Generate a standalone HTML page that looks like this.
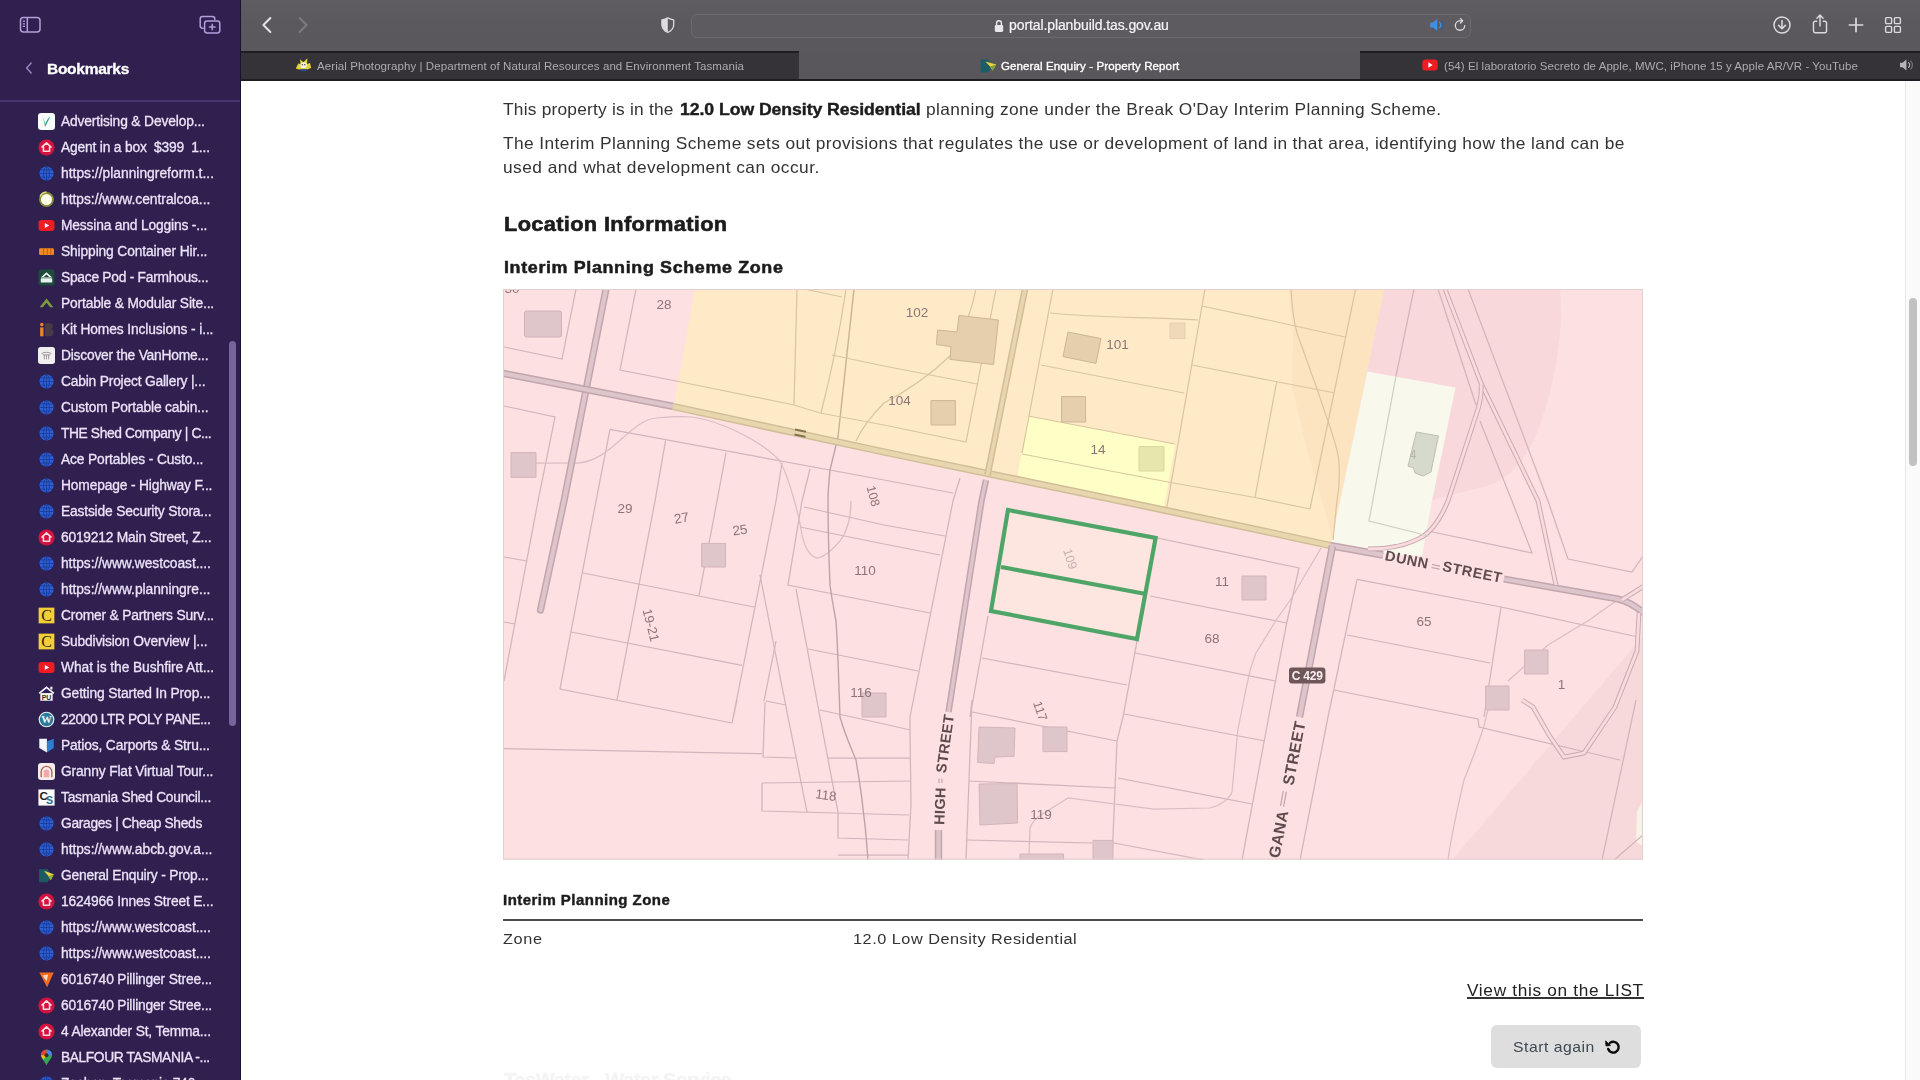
<!DOCTYPE html>
<html lang="en">
<head>
<meta charset="utf-8">
<title>General Enquiry - Property Report</title>
<style>
*{box-sizing:border-box;margin:0;padding:0}
html,body{width:1920px;height:1080px;overflow:hidden;background:#fff;font-family:"Liberation Sans",sans-serif;}
.abs{position:absolute}
#sidebar{position:absolute;left:0;top:0;width:241px;height:1080px;background:#30204f;overflow:hidden;border-right:1.6px solid #1b1132;z-index:5}
#sidebar .sep{position:absolute;left:0;top:100.4px;width:240px;height:1.4px;background:#47376c}
#sidebar .title{position:absolute;left:46px;top:58px;font-size:15.5px;font-weight:700;color:#fff;line-height:20px;letter-spacing:-0.1px}
.bm{position:absolute;left:60px;height:20px;line-height:20px;font-size:13.5px;color:#efe9f7;white-space:nowrap;-webkit-text-stroke:0.3px #efe9f7}
.ico{position:absolute;left:37.6px;width:17px;height:17px}
#sbthumb{position:absolute;left:229px;top:341px;width:7px;height:385px;border-radius:4px;background:#75659b}
#toolbar{position:absolute;left:240px;top:0;width:1680px;height:52px;background:linear-gradient(#5f5d62,#5b595e 40%,#5a585d)}
#tabbar{position:absolute;left:240px;top:51px;width:1680px;height:29.6px;background:#1f1d22;z-index:3}
.tab{position:absolute;top:1.8px;height:25.8px;background:#353338;color:#c9c7cc;font-size:11.5px;line-height:26px;white-space:nowrap}
.tab.active{background:#59575c;color:#fff;top:0;height:27.6px}
#urlbar{position:absolute;left:451px;top:14px;width:780px;height:24px;border-radius:6px;background:#5d5b60;border:1px solid #6b696e}
#page{position:absolute;left:240px;top:80px;width:1680px;height:1000px;background:#fff;overflow:hidden}
.t{position:absolute;white-space:nowrap;color:#2b2b2b;will-change:transform}
#vtrack{position:absolute;left:1905px;top:80px;width:15px;height:1000px;background:#fafafa;border-left:1px solid #e8e8e8}
#vthumb{position:absolute;left:1909px;top:298px;width:8px;height:168px;border-radius:4px;background:#c1c1c1}
</style>
</head>
<body>
<!--SIDEBAR-->
<div id="sidebar">

<svg class="abs" style="left:19px;top:15px" width="23" height="20" viewBox="0 0 23 20"><g fill="none" stroke="#b39ddb" stroke-width="1.5"><rect x="1.5" y="2.5" width="19.5" height="14.5" rx="3"/><path d="M8.3 2.5v14.5"/><path d="M3.8 6.2h2.2M3.8 8.8h2.2M3.8 11.4h2.2" stroke-width="1.2"/></g></svg>
<svg class="abs" style="left:198px;top:14px" width="25" height="22" viewBox="0 0 25 22"><g fill="none" stroke="#b39ddb" stroke-width="1.5" stroke-linecap="round"><path d="M5.2 14.2H4.6A2.4 2.4 0 0 1 2.2 11.8V5A2.4 2.4 0 0 1 4.6 2.6H14.4A2.4 2.4 0 0 1 16.8 5V5.6"/><rect x="6.6" y="7" width="15.2" height="12" rx="2.4"/><path d="M14.2 10.2v5.6M11.4 13h5.6"/></g></svg>
<svg class="abs" style="left:24px;top:61px" width="10" height="14" viewBox="0 0 10 14"><path d="M7.2 2 2.6 7 7.2 12" fill="none" stroke="#9a87c2" stroke-width="1.4" stroke-linecap="round" stroke-linejoin="round"/></svg>
<div class="t" style="left:47.00px;top:58.63px;font-size:15.5px;line-height:20px;font-weight:700;color:#ffffff;letter-spacing:-0.271px;-webkit-text-stroke:0.3px #fff;">Bookmarks</div>

<div class="sep"></div>
<svg class="ico" style="top:112.5px" viewBox="0 0 16 16"><rect x="0" y="0" width="16" height="16" rx="3" fill="#f7fbfa"/><path d="M4.2 3.5C5.5 6 6.3 8 6.8 10.2 8 7 9.6 4.6 11.8 3.2 10 6 8.6 9.5 6.6 13.2 6.3 10 5.4 6.5 4.2 3.5Z" fill="#3c9e95"/></svg>
<div class="t" style="left:60.70px;top:113.02px;font-size:13.8px;line-height:18px;font-weight:400;color:#ece3f8;letter-spacing:-0.144px;-webkit-text-stroke:0.3px #ece3f8;">Advertising &amp; Develop...</div>
<svg class="ico" style="top:138.5px" viewBox="0 0 16 16"><circle cx="8" cy="8" r="7.6" fill="#d3123f"/><path d="M8 3.6 12.3 7.6H10.9V11.6H5.1V7.6H3.7Z" fill="none" stroke="#ffd9e0" stroke-width="1.5" stroke-linejoin="round"/></svg>
<div class="t" style="left:60.70px;top:139.02px;font-size:13.8px;line-height:18px;font-weight:400;color:#ece3f8;letter-spacing:-0.178px;-webkit-text-stroke:0.3px #ece3f8;">Agent in a box&nbsp; $399&nbsp; 1...</div>
<svg class="ico" style="top:164.5px" viewBox="0 0 16 16"><circle cx="8" cy="8" r="6.6" fill="#2a5fd6"/><g fill="none" stroke="#1d3f9c" stroke-width="0.9"><ellipse cx="8" cy="8" rx="2.8" ry="6.4"/><path d="M1.6 8h12.8M2.6 4.6h10.8M2.6 11.4h10.8M8 1.5v13"/></g></svg>
<div class="t" style="left:60.70px;top:165.02px;font-size:13.8px;line-height:18px;font-weight:400;color:#ece3f8;letter-spacing:0.014px;-webkit-text-stroke:0.3px #ece3f8;">https://planningreform.t...</div>
<svg class="ico" style="top:190.5px" viewBox="0 0 16 16"><circle cx="8" cy="8" r="7" fill="#8a8a3a"/><circle cx="8" cy="8" r="5.2" fill="#fbfce9"/><path d="M2 5A7 7 0 0 1 8 1" stroke="#dfe08a" stroke-width="1.4" fill="none"/></svg>
<div class="t" style="left:60.70px;top:191.02px;font-size:13.8px;line-height:18px;font-weight:400;color:#ece3f8;letter-spacing:-0.009px;-webkit-text-stroke:0.3px #ece3f8;">https://www.centralcoa...</div>
<svg class="ico" style="top:216.5px" viewBox="0 0 16 16"><rect x="0.5" y="2.8" width="15" height="10.4" rx="3" fill="#f01c24"/><path d="M6.4 5.6 10.6 8 6.4 10.4Z" fill="#fff"/></svg>
<div class="t" style="left:60.70px;top:217.02px;font-size:13.8px;line-height:18px;font-weight:400;color:#ece3f8;letter-spacing:-0.168px;-webkit-text-stroke:0.3px #ece3f8;">Messina and Loggins -...</div>
<svg class="ico" style="top:242.5px" viewBox="0 0 16 16"><rect x="1" y="5" width="14" height="6.4" rx="1.2" fill="#f08a1e"/><path d="M5.2 5v6.4M8.8 5v6.4M12 5v6.4" stroke="#c05f10" stroke-width="0.9"/></svg>
<div class="t" style="left:60.70px;top:243.02px;font-size:13.8px;line-height:18px;font-weight:400;color:#ece3f8;letter-spacing:-0.130px;-webkit-text-stroke:0.3px #ece3f8;">Shipping Container Hir...</div>
<svg class="ico" style="top:268.5px" viewBox="0 0 16 16"><rect x="0.4" y="0.4" width="15.2" height="15.2" rx="3" fill="#1d4b3d"/><path d="M8 3 13.4 8H2.6Z" fill="#f3faf6"/><path d="M8 5.2 10.6 7.6H5.4Z" fill="#1d4b3d"/><rect x="2.6" y="8.8" width="10.8" height="4" rx="0.6" fill="#e6f3ec"/></svg>
<div class="t" style="left:60.70px;top:269.02px;font-size:13.8px;line-height:18px;font-weight:400;color:#ece3f8;letter-spacing:-0.264px;-webkit-text-stroke:0.3px #ece3f8;">Space Pod - Farmhous...</div>
<svg class="ico" style="top:294.5px" viewBox="0 0 16 16"><path d="M1.5 11.5 8 3.2 14.5 11.5H11.4L8 7.2 4.6 11.5Z" fill="#7f9a3e"/></svg>
<div class="t" style="left:60.70px;top:295.02px;font-size:13.8px;line-height:18px;font-weight:400;color:#ece3f8;letter-spacing:-0.162px;-webkit-text-stroke:0.3px #ece3f8;">Portable &amp; Modular Site...</div>
<svg class="ico" style="top:320.5px" viewBox="0 0 16 16"><rect x="2" y="6" width="3.2" height="8.4" fill="#e8842c"/><circle cx="3.6" cy="3.4" r="1.7" fill="#e8842c"/><path d="M6.6 2H10.8C13 2 14 3.3 14 5 14 6.3 13.4 7.2 12.4 7.6 13.8 8 14.6 9.2 14.6 10.8 14.6 13 13.2 14.4 10.8 14.4H6.6Z" fill="#4a3a44"/></svg>
<div class="t" style="left:60.70px;top:321.02px;font-size:13.8px;line-height:18px;font-weight:400;color:#ece3f8;letter-spacing:-0.124px;-webkit-text-stroke:0.3px #ece3f8;">Kit Homes Inclusions - i...</div>
<svg class="ico" style="top:346.5px" viewBox="0 0 16 16"><rect x="0" y="0" width="16" height="16" rx="2.6" fill="#f1eef0"/><path d="M3.4 6.2C6 4.6 10 4.6 12.6 6.2M4.4 7.4H11.6M6 7.4V11.6M8 7.4V11.6M10 7.4V11.6" stroke="#9a9496" stroke-width="0.9" fill="none"/></svg>
<div class="t" style="left:60.70px;top:347.02px;font-size:13.8px;line-height:18px;font-weight:400;color:#ece3f8;letter-spacing:-0.219px;-webkit-text-stroke:0.3px #ece3f8;">Discover the VanHome...</div>
<svg class="ico" style="top:372.5px" viewBox="0 0 16 16"><circle cx="8" cy="8" r="6.6" fill="#2a5fd6"/><g fill="none" stroke="#1d3f9c" stroke-width="0.9"><ellipse cx="8" cy="8" rx="2.8" ry="6.4"/><path d="M1.6 8h12.8M2.6 4.6h10.8M2.6 11.4h10.8M8 1.5v13"/></g></svg>
<div class="t" style="left:60.70px;top:373.02px;font-size:13.8px;line-height:18px;font-weight:400;color:#ece3f8;letter-spacing:-0.192px;-webkit-text-stroke:0.3px #ece3f8;">Cabin Project Gallery |...</div>
<svg class="ico" style="top:398.5px" viewBox="0 0 16 16"><circle cx="8" cy="8" r="6.6" fill="#2a5fd6"/><g fill="none" stroke="#1d3f9c" stroke-width="0.9"><ellipse cx="8" cy="8" rx="2.8" ry="6.4"/><path d="M1.6 8h12.8M2.6 4.6h10.8M2.6 11.4h10.8M8 1.5v13"/></g></svg>
<div class="t" style="left:60.70px;top:399.02px;font-size:13.8px;line-height:18px;font-weight:400;color:#ece3f8;letter-spacing:-0.157px;-webkit-text-stroke:0.3px #ece3f8;">Custom Portable cabin...</div>
<svg class="ico" style="top:424.5px" viewBox="0 0 16 16"><circle cx="8" cy="8" r="6.6" fill="#2a5fd6"/><g fill="none" stroke="#1d3f9c" stroke-width="0.9"><ellipse cx="8" cy="8" rx="2.8" ry="6.4"/><path d="M1.6 8h12.8M2.6 4.6h10.8M2.6 11.4h10.8M8 1.5v13"/></g></svg>
<div class="t" style="left:60.70px;top:425.02px;font-size:13.8px;line-height:18px;font-weight:400;color:#ece3f8;letter-spacing:-0.389px;-webkit-text-stroke:0.3px #ece3f8;">THE Shed Company | C...</div>
<svg class="ico" style="top:450.5px" viewBox="0 0 16 16"><circle cx="8" cy="8" r="6.6" fill="#2a5fd6"/><g fill="none" stroke="#1d3f9c" stroke-width="0.9"><ellipse cx="8" cy="8" rx="2.8" ry="6.4"/><path d="M1.6 8h12.8M2.6 4.6h10.8M2.6 11.4h10.8M8 1.5v13"/></g></svg>
<div class="t" style="left:60.70px;top:451.02px;font-size:13.8px;line-height:18px;font-weight:400;color:#ece3f8;letter-spacing:-0.142px;-webkit-text-stroke:0.3px #ece3f8;">Ace Portables - Custo...</div>
<svg class="ico" style="top:476.5px" viewBox="0 0 16 16"><circle cx="8" cy="8" r="6.6" fill="#2a5fd6"/><g fill="none" stroke="#1d3f9c" stroke-width="0.9"><ellipse cx="8" cy="8" rx="2.8" ry="6.4"/><path d="M1.6 8h12.8M2.6 4.6h10.8M2.6 11.4h10.8M8 1.5v13"/></g></svg>
<div class="t" style="left:60.70px;top:477.02px;font-size:13.8px;line-height:18px;font-weight:400;color:#ece3f8;letter-spacing:-0.157px;-webkit-text-stroke:0.3px #ece3f8;">Homepage - Highway F...</div>
<svg class="ico" style="top:502.5px" viewBox="0 0 16 16"><circle cx="8" cy="8" r="6.6" fill="#2a5fd6"/><g fill="none" stroke="#1d3f9c" stroke-width="0.9"><ellipse cx="8" cy="8" rx="2.8" ry="6.4"/><path d="M1.6 8h12.8M2.6 4.6h10.8M2.6 11.4h10.8M8 1.5v13"/></g></svg>
<div class="t" style="left:60.70px;top:503.02px;font-size:13.8px;line-height:18px;font-weight:400;color:#ece3f8;letter-spacing:-0.177px;-webkit-text-stroke:0.3px #ece3f8;">Eastside Security Stora...</div>
<svg class="ico" style="top:528.5px" viewBox="0 0 16 16"><circle cx="8" cy="8" r="7.6" fill="#d3123f"/><path d="M8 3.6 12.3 7.6H10.9V11.6H5.1V7.6H3.7Z" fill="none" stroke="#ffd9e0" stroke-width="1.5" stroke-linejoin="round"/></svg>
<div class="t" style="left:60.70px;top:529.02px;font-size:13.8px;line-height:18px;font-weight:400;color:#ece3f8;letter-spacing:-0.215px;-webkit-text-stroke:0.3px #ece3f8;">6019212 Main Street, Z...</div>
<svg class="ico" style="top:554.5px" viewBox="0 0 16 16"><circle cx="8" cy="8" r="6.6" fill="#2a5fd6"/><g fill="none" stroke="#1d3f9c" stroke-width="0.9"><ellipse cx="8" cy="8" rx="2.8" ry="6.4"/><path d="M1.6 8h12.8M2.6 4.6h10.8M2.6 11.4h10.8M8 1.5v13"/></g></svg>
<div class="t" style="left:60.70px;top:555.02px;font-size:13.8px;line-height:18px;font-weight:400;color:#ece3f8;letter-spacing:-0.050px;-webkit-text-stroke:0.3px #ece3f8;">https://www.westcoast....</div>
<svg class="ico" style="top:580.5px" viewBox="0 0 16 16"><circle cx="8" cy="8" r="6.6" fill="#2a5fd6"/><g fill="none" stroke="#1d3f9c" stroke-width="0.9"><ellipse cx="8" cy="8" rx="2.8" ry="6.4"/><path d="M1.6 8h12.8M2.6 4.6h10.8M2.6 11.4h10.8M8 1.5v13"/></g></svg>
<div class="t" style="left:60.70px;top:581.02px;font-size:13.8px;line-height:18px;font-weight:400;color:#ece3f8;letter-spacing:-0.040px;-webkit-text-stroke:0.3px #ece3f8;">https://www.planningre...</div>
<svg class="ico" style="top:606.5px" viewBox="0 0 16 16"><rect x="0.6" y="0.6" width="14.8" height="14.8" fill="#f3cf35"/><text x="8" y="13.2" font-family="Liberation Serif,serif" font-size="15" text-anchor="middle" fill="#2b2410">C</text></svg>
<div class="t" style="left:60.70px;top:607.02px;font-size:13.8px;line-height:18px;font-weight:400;color:#ece3f8;letter-spacing:-0.188px;-webkit-text-stroke:0.3px #ece3f8;">Cromer &amp; Partners Surv...</div>
<svg class="ico" style="top:632.5px" viewBox="0 0 16 16"><rect x="0.6" y="0.6" width="14.8" height="14.8" fill="#f3cf35"/><text x="8" y="13.2" font-family="Liberation Serif,serif" font-size="15" text-anchor="middle" fill="#2b2410">C</text></svg>
<div class="t" style="left:60.70px;top:633.02px;font-size:13.8px;line-height:18px;font-weight:400;color:#ece3f8;letter-spacing:-0.180px;-webkit-text-stroke:0.3px #ece3f8;">Subdivision Overview |...</div>
<svg class="ico" style="top:658.5px" viewBox="0 0 16 16"><rect x="0.5" y="2.8" width="15" height="10.4" rx="3" fill="#f01c24"/><path d="M6.4 5.6 10.6 8 6.4 10.4Z" fill="#fff"/></svg>
<div class="t" style="left:60.70px;top:659.02px;font-size:13.8px;line-height:18px;font-weight:400;color:#ece3f8;letter-spacing:-0.071px;-webkit-text-stroke:0.3px #ece3f8;">What is the Bushfire Att...</div>
<svg class="ico" style="top:684.5px" viewBox="0 0 16 16"><path d="M8 1.2 15.4 7.4 14.4 8.4 8 3.2 1.6 8.4 0.6 7.4Z" fill="#f4f1f4"/><rect x="2.2" y="7.6" width="11.6" height="7.2" fill="#fbf7ee"/><text x="8" y="14" font-family="Liberation Sans,sans-serif" font-weight="700" font-size="6.6" text-anchor="middle" fill="#3b2f2a">PU</text><rect x="11.6" y="1.6" width="2" height="2.6" fill="#f4f1f4"/></svg>
<div class="t" style="left:60.70px;top:685.02px;font-size:13.8px;line-height:18px;font-weight:400;color:#ece3f8;letter-spacing:-0.128px;-webkit-text-stroke:0.3px #ece3f8;">Getting Started In Prop...</div>
<svg class="ico" style="top:710.5px" viewBox="0 0 16 16"><circle cx="8" cy="8" r="7.4" fill="#e9eef2"/><circle cx="8" cy="8" r="6.3" fill="#2c7a9b"/><text x="8" y="11.6" font-family="Liberation Serif,serif" font-weight="700" font-size="10" text-anchor="middle" fill="#eef3f6">W</text></svg>
<div class="t" style="left:60.70px;top:711.02px;font-size:13.8px;line-height:18px;font-weight:400;color:#ece3f8;letter-spacing:-0.418px;-webkit-text-stroke:0.3px #ece3f8;">22000 LTR POLY PANE...</div>
<svg class="ico" style="top:736.5px" viewBox="0 0 16 16"><path d="M1.2 1.6H8.4V14.6L1.2 10.4Z" fill="#f3f6fb"/><path d="M8.4 4.2 14.8 1.6V10.4L8.4 14.6Z" fill="#2f7fd1"/></svg>
<div class="t" style="left:60.70px;top:737.02px;font-size:13.8px;line-height:18px;font-weight:400;color:#ece3f8;letter-spacing:-0.146px;-webkit-text-stroke:0.3px #ece3f8;">Patios, Carports &amp; Stru...</div>
<svg class="ico" style="top:762.5px" viewBox="0 0 16 16"><rect x="0" y="0" width="16" height="16" rx="3" fill="#f6ecec"/><path d="M3 13.4V8.2A5 5 0 0 1 13 8.2V13.4" fill="none" stroke="#b5645c" stroke-width="1.3"/><path d="M5.4 13.4V8.8A2.6 2.6 0 0 1 10.6 8.8V13.4Z" fill="#f2a9a4"/></svg>
<div class="t" style="left:60.70px;top:763.02px;font-size:13.8px;line-height:18px;font-weight:400;color:#ece3f8;letter-spacing:-0.135px;-webkit-text-stroke:0.3px #ece3f8;">Granny Flat Virtual Tour...</div>
<svg class="ico" style="top:788.5px" viewBox="0 0 16 16"><rect x="0.4" y="0.4" width="15.2" height="15.2" fill="#fbfbfb"/><text x="5.4" y="10.6" font-family="Liberation Sans,sans-serif" font-weight="700" font-size="11" text-anchor="middle" fill="#1d1d1d">C</text><text x="10.8" y="14.4" font-family="Liberation Sans,sans-serif" font-weight="700" font-size="10" text-anchor="middle" fill="#2d6a8e">S</text></svg>
<div class="t" style="left:60.70px;top:789.02px;font-size:13.8px;line-height:18px;font-weight:400;color:#ece3f8;letter-spacing:-0.269px;-webkit-text-stroke:0.3px #ece3f8;">Tasmania Shed Council...</div>
<svg class="ico" style="top:814.5px" viewBox="0 0 16 16"><circle cx="8" cy="8" r="6.6" fill="#2a5fd6"/><g fill="none" stroke="#1d3f9c" stroke-width="0.9"><ellipse cx="8" cy="8" rx="2.8" ry="6.4"/><path d="M1.6 8h12.8M2.6 4.6h10.8M2.6 11.4h10.8M8 1.5v13"/></g></svg>
<div class="t" style="left:60.70px;top:815.02px;font-size:13.8px;line-height:18px;font-weight:400;color:#ece3f8;letter-spacing:-0.323px;-webkit-text-stroke:0.3px #ece3f8;">Garages | Cheap Sheds</div>
<svg class="ico" style="top:840.5px" viewBox="0 0 16 16"><circle cx="8" cy="8" r="6.6" fill="#2a5fd6"/><g fill="none" stroke="#1d3f9c" stroke-width="0.9"><ellipse cx="8" cy="8" rx="2.8" ry="6.4"/><path d="M1.6 8h12.8M2.6 4.6h10.8M2.6 11.4h10.8M8 1.5v13"/></g></svg>
<div class="t" style="left:60.70px;top:841.02px;font-size:13.8px;line-height:18px;font-weight:400;color:#ece3f8;letter-spacing:-0.042px;-webkit-text-stroke:0.3px #ece3f8;">https://www.abcb.gov.a...</div>
<svg class="ico" style="top:866.5px" viewBox="0 0 16 16"><path d="M1 2.2H9L13 8.2 9 14.4H1Z" fill="#1d5b63"/><path d="M5.6 3.6 14.8 6.8 12 12.4 9.8 8.4Z" fill="#f1d43a"/><path d="M9.8 8.4 14.8 6.8 12 12.4Z" fill="#8fae3b"/></svg>
<div class="t" style="left:60.70px;top:867.02px;font-size:13.8px;line-height:18px;font-weight:400;color:#ece3f8;letter-spacing:-0.212px;-webkit-text-stroke:0.3px #ece3f8;">General Enquiry - Prop...</div>
<svg class="ico" style="top:892.5px" viewBox="0 0 16 16"><circle cx="8" cy="8" r="7.6" fill="#d3123f"/><path d="M8 3.6 12.3 7.6H10.9V11.6H5.1V7.6H3.7Z" fill="none" stroke="#ffd9e0" stroke-width="1.5" stroke-linejoin="round"/></svg>
<div class="t" style="left:60.70px;top:893.02px;font-size:13.8px;line-height:18px;font-weight:400;color:#ece3f8;letter-spacing:-0.167px;-webkit-text-stroke:0.3px #ece3f8;">1624966 Innes Street E...</div>
<svg class="ico" style="top:918.5px" viewBox="0 0 16 16"><circle cx="8" cy="8" r="6.6" fill="#2a5fd6"/><g fill="none" stroke="#1d3f9c" stroke-width="0.9"><ellipse cx="8" cy="8" rx="2.8" ry="6.4"/><path d="M1.6 8h12.8M2.6 4.6h10.8M2.6 11.4h10.8M8 1.5v13"/></g></svg>
<div class="t" style="left:60.70px;top:919.02px;font-size:13.8px;line-height:18px;font-weight:400;color:#ece3f8;letter-spacing:-0.050px;-webkit-text-stroke:0.3px #ece3f8;">https://www.westcoast....</div>
<svg class="ico" style="top:944.5px" viewBox="0 0 16 16"><circle cx="8" cy="8" r="6.6" fill="#2a5fd6"/><g fill="none" stroke="#1d3f9c" stroke-width="0.9"><ellipse cx="8" cy="8" rx="2.8" ry="6.4"/><path d="M1.6 8h12.8M2.6 4.6h10.8M2.6 11.4h10.8M8 1.5v13"/></g></svg>
<div class="t" style="left:60.70px;top:945.02px;font-size:13.8px;line-height:18px;font-weight:400;color:#ece3f8;letter-spacing:-0.050px;-webkit-text-stroke:0.3px #ece3f8;">https://www.westcoast....</div>
<svg class="ico" style="top:970.5px" viewBox="0 0 16 16"><path d="M1.2 1.4H14.8L8.6 15.2Z" fill="#ef6a1f"/><path d="M4.2 4.2 9.6 3.4 8 9.6Z" fill="#ffd7ba"/></svg>
<div class="t" style="left:60.70px;top:971.02px;font-size:13.8px;line-height:18px;font-weight:400;color:#ece3f8;letter-spacing:-0.151px;-webkit-text-stroke:0.3px #ece3f8;">6016740 Pillinger Stree...</div>
<svg class="ico" style="top:996.5px" viewBox="0 0 16 16"><circle cx="8" cy="8" r="7.6" fill="#d3123f"/><path d="M8 3.6 12.3 7.6H10.9V11.6H5.1V7.6H3.7Z" fill="none" stroke="#ffd9e0" stroke-width="1.5" stroke-linejoin="round"/></svg>
<div class="t" style="left:60.70px;top:997.02px;font-size:13.8px;line-height:18px;font-weight:400;color:#ece3f8;letter-spacing:-0.151px;-webkit-text-stroke:0.3px #ece3f8;">6016740 Pillinger Stree...</div>
<svg class="ico" style="top:1022.5px" viewBox="0 0 16 16"><circle cx="8" cy="8" r="7.6" fill="#d3123f"/><path d="M8 3.6 12.3 7.6H10.9V11.6H5.1V7.6H3.7Z" fill="none" stroke="#ffd9e0" stroke-width="1.5" stroke-linejoin="round"/></svg>
<div class="t" style="left:60.70px;top:1023.02px;font-size:13.8px;line-height:18px;font-weight:400;color:#ece3f8;letter-spacing:-0.170px;-webkit-text-stroke:0.3px #ece3f8;">4 Alexander St, Temma...</div>
<svg class="ico" style="top:1048.5px" viewBox="0 0 16 16"><path d="M8 0.8C11 0.8 13.2 3 13.2 5.8 13.2 9 9.6 11.4 8 15.4 6.4 11.4 2.8 9 2.8 5.8 2.8 3 5 0.8 8 0.8Z" fill="#34a853"/><path d="M8 0.8C11 0.8 13.2 3 13.2 5.8L8 5.8Z" fill="#4285f4"/><path d="M2.8 5.8C2.8 3 5 0.8 8 0.8V5.8Z" fill="#ea4335"/><path d="M2.8 5.8H8L5 10Z" fill="#fbbc04"/><circle cx="8" cy="5.8" r="1.9" fill="#3b2a2a"/></svg>
<div class="t" style="left:60.70px;top:1049.02px;font-size:13.8px;line-height:18px;font-weight:400;color:#ece3f8;letter-spacing:-0.411px;-webkit-text-stroke:0.3px #ece3f8;">BALFOUR TASMANIA -...</div>
<svg class="ico" style="top:1074.5px" viewBox="0 0 16 16"><circle cx="8" cy="8" r="6.6" fill="#2a5fd6"/><g fill="none" stroke="#1d3f9c" stroke-width="0.9"><ellipse cx="8" cy="8" rx="2.8" ry="6.4"/><path d="M1.6 8h12.8M2.6 4.6h10.8M2.6 11.4h10.8M8 1.5v13"/></g></svg>
<div class="t" style="left:60.70px;top:1075.02px;font-size:13.8px;line-height:18px;font-weight:400;color:#ece3f8;letter-spacing:-0.318px;-webkit-text-stroke:0.3px #ece3f8;">Zeehan, Tasmania 746...</div>
<div id="sbthumb"></div>
</div>
<!--TOOLBAR-->
<div id="toolbar">
<div id="urlbar"></div>

<svg class="abs" style="left:20px;top:16px" width="14" height="18" viewBox="0 0 14 18"><path d="M10.4 2 3.4 9 10.4 16" fill="none" stroke="#e4e2e6" stroke-width="2" stroke-linecap="round" stroke-linejoin="round"/></svg>
<svg class="abs" style="left:56px;top:16px" width="14" height="18" viewBox="0 0 14 18"><path d="M3.6 2 10.6 9 3.6 16" fill="none" stroke="#7d7b80" stroke-width="2" stroke-linecap="round" stroke-linejoin="round"/></svg>
<svg class="abs" style="left:420px;top:16px" width="15.6" height="18.4" viewBox="0 0 18 20"><path d="M9 1.6C11.4 3 13.6 3.6 15.8 3.8V9.6C15.8 13.6 13 16.6 9 18.4 5 16.6 2.2 13.6 2.2 9.6V3.8C4.4 3.6 6.6 3 9 1.6Z" fill="none" stroke="#dddbe0" stroke-width="1.5" stroke-linejoin="round"/><path d="M9 1.6C6.6 3 4.4 3.6 2.2 3.8V9.6C2.2 13.6 5 16.6 9 18.4Z" fill="#dddbe0"/></svg>
<svg class="abs" style="left:754px;top:19px" width="10" height="14" viewBox="0 0 10 14"><rect x="0.8" y="6" width="8.4" height="7" rx="1.4" fill="#e9e7ec"/><path d="M2.6 6.4V4.2A2.4 2.4 0 0 1 7.4 4.2V6.4" fill="none" stroke="#e9e7ec" stroke-width="1.4"/></svg>
<svg class="abs" style="left:1189px;top:17px" width="18" height="16" viewBox="0 0 18 16"><path d="M1.2 5.6H4L8.2 2V14L4 10.4H1.2Z" fill="#3f8fe8"/><path d="M10.6 5.4A3.6 3.6 0 0 1 10.6 10.6" fill="none" stroke="#3f8fe8" stroke-width="1.3" stroke-linecap="round"/><path d="M12.8 3.4A6.4 6.4 0 0 1 12.8 12.6" fill="none" stroke="#2d5f99" stroke-width="1.2" stroke-linecap="round"/></svg>
<svg class="abs" style="left:1213px;top:17.6px" width="14.4" height="14.4" viewBox="0 0 16 16"><path d="M13 8.6A5.2 5.2 0 1 1 8 3.2H10" fill="none" stroke="#dcdadf" stroke-width="1.5" stroke-linecap="round"/><path d="M8.4 0.8 10.8 3.2 8.4 5.6" fill="none" stroke="#dcdadf" stroke-width="1.5" stroke-linecap="round" stroke-linejoin="round"/></svg>
<svg class="abs" style="left:1532px;top:15px" width="20" height="20" viewBox="0 0 20 20"><circle cx="10" cy="10" r="8" fill="none" stroke="#dcdadf" stroke-width="1.5"/><path d="M10 5.4V13.6M6.6 10.4 10 13.8 13.4 10.4" fill="none" stroke="#dcdadf" stroke-width="1.5" stroke-linecap="round" stroke-linejoin="round"/></svg>
<svg class="abs" style="left:1570px;top:13.2px" width="20" height="23" viewBox="0 0 20 24"><path d="M6.6 8.6H5A1.8 1.8 0 0 0 3.2 10.4V18.8A1.8 1.8 0 0 0 5 20.6H15A1.8 1.8 0 0 0 16.8 18.8V10.4A1.8 1.8 0 0 0 15 8.6H13.4" fill="none" stroke="#dcdadf" stroke-width="1.5" stroke-linecap="round"/><path d="M10 2.4V13.6M6.8 5.4 10 2.2 13.2 5.4" fill="none" stroke="#dcdadf" stroke-width="1.5" stroke-linecap="round" stroke-linejoin="round"/></svg>
<svg class="abs" style="left:1607px;top:16px" width="18" height="18" viewBox="0 0 18 18"><path d="M9 2.4V15.6M2.4 9H15.6" fill="none" stroke="#dcdadf" stroke-width="1.7" stroke-linecap="round"/></svg>
<svg class="abs" style="left:1644px;top:16px" width="18" height="18" viewBox="0 0 18 18"><g fill="none" stroke="#dcdadf" stroke-width="1.4"><rect x="1.6" y="1.6" width="6" height="6" rx="1.2"/><rect x="10.4" y="1.6" width="6" height="6" rx="1.2"/><rect x="1.6" y="10.4" width="6" height="6" rx="1.2"/><rect x="10.4" y="10.4" width="6" height="6" rx="1.2"/></g></svg>
<div class="t" style="left:768.70px;top:16.15px;font-size:14px;line-height:18px;font-weight:400;color:#f5f3f7;letter-spacing:-0.097px;-webkit-text-stroke:0.2px #f5f3f7;">portal.planbuild.tas.gov.au</div>
</div>
<div id="tabbar">

<div class="tab" style="left:0;width:559px"></div>
<div class="tab active" style="left:559px;width:561px"></div>
<div class="tab" style="left:1120px;width:560px"></div>
<svg class="abs" style="left:55px;top:5px" width="17" height="17" viewBox="0 0 17 17"><path d="M0.8 12.6 3.4 7.2 5.6 8.4 5 3.2 8.4 6.2 12.4 2.2 12 8 15 7 16.2 12 12 13.4H4Z" fill="#e4d23a"/><ellipse cx="8.6" cy="9.2" rx="3.3" ry="2.9" fill="#f6f2e6"/><circle cx="7.4" cy="8.8" r="0.75" fill="#4a4430"/><circle cx="9.8" cy="8.8" r="0.75" fill="#4a4430"/><path d="M4.6 13.2H12.2L10.8 15.2H6.2Z" fill="#27479a"/></svg>
<svg class="abs" style="left:740px;top:8px" width="17" height="14" viewBox="0 0 17 14"><path d="M0.6 0.6H8.2L12.4 6.8 8.2 13.4H0.6Z" fill="#1d5b66"/><path d="M5.4 2.4 16.2 5.6 12.6 11.6 10 7.4Z" fill="#ecd23c"/><path d="M10 7.4 16.2 5.6 12.6 11.6Z" fill="#7da23a"/></svg>
<svg class="abs" style="left:1182px;top:8px" width="16" height="12" viewBox="0 0 16 12"><rect x="0.3" y="0.4" width="15.4" height="11.2" rx="3" fill="#f01c24"/><path d="M6.4 3.2 10.6 6 6.4 8.8Z" fill="#fff"/></svg>
<svg class="abs" style="left:1659px;top:7px" width="16" height="14" viewBox="0 0 16 14"><path d="M1 4.8H3.6L7.4 1.6V12.4L3.6 9.2H1Z" fill="#b5b3b8"/><path d="M9.6 4.6A3.2 3.2 0 0 1 9.6 9.4" fill="none" stroke="#b5b3b8" stroke-width="1.2" stroke-linecap="round"/><path d="M11.6 2.8A5.8 5.8 0 0 1 11.6 11.2" fill="none" stroke="#77757a" stroke-width="1.1" stroke-linecap="round"/></svg>
<div class="t" style="left:77.00px;top:7.72px;font-size:11.5px;line-height:15px;font-weight:400;color:#adabb0;letter-spacing:0.080px;">Aerial Photography | Department of Natural Resources and Environment Tasmania</div><div class="t" style="left:761.00px;top:7.72px;font-size:11.5px;line-height:15px;font-weight:400;color:#ffffff;letter-spacing:0.118px;-webkit-text-stroke:0.35px #fff;">General Enquiry - Property Report</div><div class="t" style="left:1204.00px;top:7.72px;font-size:11.5px;line-height:15px;font-weight:400;color:#adabb0;letter-spacing:0.061px;">(54) El laboratorio Secreto de Apple, MWC, iPhone 15 y Apple AR/VR - YouTube</div>
</div>
<!--PAGE-->
<div id="page">
<div class="t" style="left:263.30px;top:19.08px;font-size:16.5px;line-height:21px;font-weight:400;color:#333333;letter-spacing:0.210px;transform:scaleX(1.05);transform-origin:0 0;">This property is in the</div>
<div class="t" style="left:440.00px;top:19.08px;font-size:16.5px;line-height:21px;font-weight:700;color:#1c1c1c;letter-spacing:-0.059px;-webkit-text-stroke:0.4px #1c1c1c;transform:scaleX(1.07);transform-origin:0 0;">12.0 Low Density Residential</div>
<div class="t" style="left:686.00px;top:19.08px;font-size:16.5px;line-height:21px;font-weight:400;color:#333333;letter-spacing:0.380px;transform:scaleX(1.05);transform-origin:0 0;">planning zone under the Break O'Day Interim Planning Scheme.</div>
<div class="t" style="left:263.30px;top:53.48px;font-size:16.5px;line-height:21px;font-weight:400;color:#333333;letter-spacing:0.368px;transform:scaleX(1.05);transform-origin:0 0;">The Interim Planning Scheme sets out provisions that regulates the use or development of land in that area, identifying how the land can be</div>
<div class="t" style="left:263.30px;top:77.28px;font-size:16.5px;line-height:21px;font-weight:400;color:#333333;letter-spacing:0.428px;transform:scaleX(1.05);transform-origin:0 0;">used and what development can occur.</div>
<div class="t" style="left:263.50px;top:130.80px;font-size:20.2px;line-height:26px;font-weight:700;color:#1c1c1c;letter-spacing:0.310px;-webkit-text-stroke:0.6px #1c1c1c;transform:scaleX(1.08);transform-origin:0 0;">Location Information</div>
<div class="t" style="left:263.50px;top:177.15px;font-size:16.3px;line-height:21px;font-weight:700;color:#1c1c1c;letter-spacing:0.577px;-webkit-text-stroke:0.5px #1c1c1c;transform:scaleX(1.1);transform-origin:0 0;">Interim Planning Scheme Zone</div>
<svg class="abs" style="left:263px;top:209px;will-change:transform" width="1140" height="571" viewBox="503 289 1140 571" font-family="Liberation Sans, sans-serif">
<rect x="503" y="289" width="1140" height="571" fill="#fde0e1"/>
<path d="M1383 289H1560C1564 330 1556 380 1540 425 1528 458 1512 476 1490 485L1436 499 1432 501 1422 556 1330 547Z" fill="#f9d8db"/>
<path d="M1643 636 1452 860H1643Z" fill="#f8d9db"/>
<path d="M1643 800 1637 812 1636 842 1643 846Z" fill="#f7f3e6"/>
<path d="M695 289H1384L1330 549.5 1268 535 1132 506 884 455 673 410Z" fill="#feeac7"/>
<path d="M1289 289H1384L1330 549 1333 545 1327 519 1307 450 1292 387 1293 336Z" fill="#fde4c0"/>
<path d="M1028 416 1175 444 1163 512.5 1132 506 1016.5 482Z" fill="#feffc6"/>
<path d="M1367.4 371.4 1455.6 387.4 1432 501 1422 556 1330 549Z" fill="#f8f8ec"/>
<path d="M1008 510 1155.6 538 1137 639 991 611Z" fill="#fde6df"/>
<path d="M636 289 620 370 676 381" fill="none" stroke="#d2b4bc" stroke-width="1.25" />
<path d="M576 289 562 359 504 347" fill="none" stroke="#d2b4bc" stroke-width="1.25" />
<path d="M504 406 555 417 538 501 504 681" fill="none" stroke="#d2b4bc" stroke-width="1.25" />
<path d="M610 429.4 884 480 953 493" fill="none" stroke="#d2b4bc" stroke-width="1.25" />
<path d="M610 429.4 596 501 560 689 732 723" fill="none" stroke="#d2b4bc" stroke-width="1.25" />
<path d="M665.6 440.6 655 501 617 700" fill="none" stroke="#d2b4bc" stroke-width="1.25" />
<path d="M726 452.6 717 501 699 596" fill="none" stroke="#d2b4bc" stroke-width="1.25" />
<path d="M782 463 776 501 732 723 737 700" fill="none" stroke="#d2b4bc" stroke-width="1.25" />
<path d="M810 469 802 501 788 585 884 604 930 613" fill="none" stroke="#d2b4bc" stroke-width="1.25" />
<path d="M583 573 754 607" fill="none" stroke="#d2b4bc" stroke-width="1.25" />
<path d="M571 632 742 665.4" fill="none" stroke="#d2b4bc" stroke-width="1.25" />
<path d="M504 557 527 561" fill="none" stroke="#d2b4bc" stroke-width="1.25" />
<path d="M504 622 515 624" fill="none" stroke="#d2b4bc" stroke-width="1.25" />
<path d="M804 507 884 525 945 536" fill="none" stroke="#d2b4bc" stroke-width="1.25" />
<path d="M800 527 884 544 940 555" fill="none" stroke="#d2b4bc" stroke-width="1.25" />
<path d="M760 575 788 717 807 812" fill="none" stroke="#d2b4bc" stroke-width="1.25" />
<path d="M776 641 764 701" fill="none" stroke="#d2b4bc" stroke-width="1.25" />
<path d="M796 589 820 717 838 812 838 838 908 840" fill="none" stroke="#d2b4bc" stroke-width="1.25" />
<path d="M808 649 884 664 918 671" fill="none" stroke="#d2b4bc" stroke-width="1.25" />
<path d="M766 701 786 705" fill="none" stroke="#d2b4bc" stroke-width="1.25" />
<path d="M504 748.6 762 753.6" fill="none" stroke="#d2b4bc" stroke-width="1.25" />
<path d="M765 702 763 757 797 758" fill="none" stroke="#d2b4bc" stroke-width="1.25" />
<path d="M828 758 911 758" fill="none" stroke="#d2b4bc" stroke-width="1.25" />
<path d="M762 783 911 781" fill="none" stroke="#d2b4bc" stroke-width="1.25" />
<path d="M762 783 762 811 909 815" fill="none" stroke="#d2b4bc" stroke-width="1.25" />
<path d="M838 855 908 855" fill="none" stroke="#d2b4bc" stroke-width="1.25" />
<path d="M820 710 884 724 910 730" fill="none" stroke="#d2b4bc" stroke-width="1.25" />
<path d="M960 478 953 501 910 717 910 730 911 804 908 860" fill="none" stroke="#d2b4bc" stroke-width="1.25" />
<path d="M988 616 970 717 972 700 966 860" fill="none" stroke="#d2b4bc" stroke-width="1.25" />
<path d="M1157.6 538 1299 568 1286.7 623 1275.5 681 1264.4 740 1242 860" fill="none" stroke="#d2b4bc" stroke-width="1.25" />
<path d="M1150 596 1286.7 623" fill="none" stroke="#d2b4bc" stroke-width="1.25" />
<path d="M1137 641 1123 717 1117 741 1112 860" fill="none" stroke="#d2b4bc" stroke-width="1.25" />
<path d="M982 658 1127 685" fill="none" stroke="#d2b4bc" stroke-width="1.25" />
<path d="M1135 653 1275.5 681" fill="none" stroke="#d2b4bc" stroke-width="1.25" />
<path d="M972 712 1117 741" fill="none" stroke="#d2b4bc" stroke-width="1.25" />
<path d="M969 781 1116 788" fill="none" stroke="#d2b4bc" stroke-width="1.25" />
<path d="M967 840 1092 843" fill="none" stroke="#d2b4bc" stroke-width="1.25" />
<path d="M1124 714 1265 741" fill="none" stroke="#d2b4bc" stroke-width="1.25" />
<path d="M1118 778 1252 804" fill="none" stroke="#d2b4bc" stroke-width="1.25" />
<path d="M1114 843 1204 860" fill="none" stroke="#d2b4bc" stroke-width="1.25" />
<path d="M1357 579.4 1501 607 1638 637" fill="none" stroke="#d2b4bc" stroke-width="1.25" />
<path d="M1357 579.4 1328 717 1300 860" fill="none" stroke="#d2b4bc" stroke-width="1.25" />
<path d="M1347 635 1490 663" fill="none" stroke="#d2b4bc" stroke-width="1.25" />
<path d="M1334 690 1478 719 1479 727 1620 760" fill="none" stroke="#d2b4bc" stroke-width="1.25" />
<path d="M1501 607 1484 717" fill="none" stroke="#d2b4bc" stroke-width="1.25" />
<path d="M1428 531 1532 553 1512 501 1480 421" fill="none" stroke="#d2b4bc" stroke-width="1.25" />
<path d="M1468 289 1548 501 1568 559 1632 572 1643 556" fill="none" stroke="#d2b4bc" stroke-width="1.25" />
<path d="M1438 289 1476 405" fill="none" stroke="#d2b4bc" stroke-width="1.25" />
<path d="M1636 700 1602 860" fill="none" stroke="#d2b4bc" stroke-width="1.25" />
<path d="M1643 835 1614 860" fill="none" stroke="#d2b4bc" stroke-width="1.25" />
<path d="M1414 289 1396 376" fill="none" stroke="#d2b4bc" stroke-width="1.25" />
<path d="M536 463H576C610 463 630 420 656 418 668 417 680 416 692 417 712 420 730 428 740 433 758 442 772 452 780 461 790 480 800 520 802 535 805 550 812 558 818 558 826 556 834 548 840 541 848 530 851 515 851 501" fill="none" stroke="#dabec5" stroke-width="1.25" />
<path d="M1321 548 1291 599 1275.5 621 1255.5 654C1250 668 1248 678 1246.7 685.5L1237.8 730 1232 792" fill="none" stroke="#dabec5" stroke-width="1.25" />
<path d="M1643 585C1625 595 1605 608 1588 621 1572 630 1560 638 1548 645L1508 681" fill="none" stroke="#dabec5" stroke-width="1.25" />
<path d="M1488 710C1486 716 1485 722 1484 726 1478 745 1470 765 1464 780 1457 810 1451 838 1448 860" fill="none" stroke="#dabec5" stroke-width="1.25" />
<path d="M1029 854 1030 828C1032 822 1036 818 1041 815L1068 798 1154 809 1210 808C1222 805 1230 798 1232 792" fill="none" stroke="#dabec5" stroke-width="1.25" />
<path d="M854 289 838 437" fill="none" stroke="#c8b48f" stroke-width="1.4" />
<path d="M838 437 830 470C828 490 828 500 828 501 828 530 829 560 830 585 832 600 834 610 836 621 838 650 839 690 840 717 845 735 852 750 856 760 862 795 866 830 868 860" fill="none" stroke="#bfa3ab" stroke-width="1.4" />
<path d="M797 289 794 405" fill="none" stroke="#d9c6a0" stroke-width="1.25" />
<path d="M676 381 794 405 820 413 884 425 966 442 996 289" fill="none" stroke="#d9c6a0" stroke-width="1.25" />
<path d="M804 289 842 297" fill="none" stroke="#d9c6a0" stroke-width="1.25" />
<path d="M832 355 884 366 977 384" fill="none" stroke="#d9c6a0" stroke-width="1.25" />
<path d="M1053 289 1022 453" fill="none" stroke="#d9c6a0" stroke-width="1.25" />
<path d="M1041 365 1184 393" fill="none" stroke="#d9c6a0" stroke-width="1.25" />
<path d="M1028 416 1175 444" fill="none" stroke="#d9c6a0" stroke-width="1.25" />
<path d="M1022 454 1168 482 1255 497.5 1310 509" fill="none" stroke="#d9c6a0" stroke-width="1.25" />
<path d="M1255 497.5 1276.7 381.7" fill="none" stroke="#d9c6a0" stroke-width="1.25" />
<path d="M1205 289 1168 501 1166 510" fill="none" stroke="#d9c6a0" stroke-width="1.25" />
<path d="M1202 306 1268 320 1345 337" fill="none" stroke="#d9c6a0" stroke-width="1.25" />
<path d="M1192 365 1268 380 1335 393" fill="none" stroke="#d9c6a0" stroke-width="1.25" />
<path d="M1355.6 289 1310 509" fill="none" stroke="#d9c6a0" stroke-width="1.25" />
<path d="M846 289C840 330 832 370 821 413" fill="none" stroke="#d9c6a0" stroke-width="1.25" />
<path d="M976 289C972 310 962 335 950 356 930 375 905 392 884 403 872 415 862 428 856 441" fill="none" stroke="#d9c6a0" stroke-width="1.25" />
<path d="M1050 313C1100 318 1150 317 1198 320" fill="none" stroke="#d9c6a0" stroke-width="1.25" />
<path d="M1291 289C1292 310 1294 322 1297 333L1317 389 1330 427C1336 445 1339 455 1339 463 1340 480 1338 495 1337 500L1333 540" fill="none" stroke="#d9c6a0" stroke-width="1.25" />
<path d="M606 289 564 501 540.5 610" fill="none" stroke="#c2a5ad" stroke-width="7.2" stroke-linecap="round"/>
<path d="M606 289 564 501 540.5 610" fill="none" stroke="#dcc6cb" stroke-width="4.2" stroke-linecap="round"/>
<path d="M503 373.3 673 406.3" fill="none" stroke="#c2a5ad" stroke-width="7.4" stroke-linecap="butt"/>
<path d="M503 373.3 673 406.3" fill="none" stroke="#dcc6cb" stroke-width="4.4" stroke-linecap="butt"/>
<path d="M673 406.5 884 452 1132 503.3 1268 532 1330 545.5" fill="none" stroke="#d1bd97" stroke-width="7.4" stroke-linecap="butt"/>
<path d="M673 406.5 884 452 1132 503.3 1268 532 1330 545.5" fill="none" stroke="#e8d6af" stroke-width="4.4" stroke-linecap="butt"/>
<path d="M1330 545.5 1383 555" fill="none" stroke="#c2a5ad" stroke-width="7.4" stroke-linecap="butt"/>
<path d="M1330 545.5 1383 555" fill="none" stroke="#dcc6cb" stroke-width="4.4" stroke-linecap="butt"/>
<path d="M1504 579 1618 599C1630 602 1638 608 1644 613" fill="none" stroke="#c2a5ad" stroke-width="7" stroke-linecap="butt"/>
<path d="M1504 579 1618 599C1630 602 1638 608 1644 613" fill="none" stroke="#dcc6cb" stroke-width="4" stroke-linecap="butt"/>
<path d="M1025 289 987.5 475" fill="none" stroke="#d1bd97" stroke-width="6.6" stroke-linecap="butt"/>
<path d="M1025 289 987.5 475" fill="none" stroke="#e8d6af" stroke-width="3.5999999999999996" stroke-linecap="butt"/>
<path d="M986 480 981.5 501 948.5 712" fill="none" stroke="#c2a5ad" stroke-width="6.4" stroke-linecap="butt"/>
<path d="M986 480 981.5 501 948.5 712" fill="none" stroke="#dcc6cb" stroke-width="3.4000000000000004" stroke-linecap="butt"/>
<path d="M938.5 830V860" fill="none" stroke="#c2a5ad" stroke-width="7.4" stroke-linecap="butt"/>
<path d="M938.5 830V860" fill="none" stroke="#dcc6cb" stroke-width="4.4" stroke-linecap="butt"/>
<path d="M1332.5 546 1299.5 717" fill="none" stroke="#c2a5ad" stroke-width="7.4" stroke-linecap="butt"/>
<path d="M1332.5 546 1299.5 717" fill="none" stroke="#dcc6cb" stroke-width="4.4" stroke-linecap="butt"/>
<path d="M795 429.5 806 431.7M794.5 434.5 805.5 436.7" stroke="#85754f" stroke-width="2" fill="none"/>
<path d="M1445 289 1481 383 1538 501 1556 585" fill="none" stroke="#c9abb3" stroke-width="4.800000000000001"/>
<path d="M1445 289 1481 383 1538 501 1556 585" fill="none" stroke="#f9dadd" stroke-width="2.8000000000000003"/>
<path d="M1481 385C1482 395 1480 402 1478 409L1448 501C1440 520 1430 533 1420 538 1405 546 1385 549 1368 549" fill="none" stroke="#c9abb3" stroke-width="4.800000000000001"/>
<path d="M1481 385C1482 395 1480 402 1478 409L1448 501C1440 520 1430 533 1420 538 1405 546 1385 549 1368 549" fill="none" stroke="#f9dadd" stroke-width="2.8000000000000003"/>
<path d="M1639 613 1637 651 1615 707 1584 753 1564 757 1549 735 1533 707 1522 700" fill="none" stroke="#c9abb3" stroke-width="4.800000000000001"/>
<path d="M1639 613 1637 651 1615 707 1584 753 1564 757 1549 735 1533 707 1522 700" fill="none" stroke="#f9dadd" stroke-width="2.8000000000000003"/>
<path d="M1622 600 1644 586" fill="none" stroke="#c9abb3" stroke-width="4.800000000000001"/>
<path d="M1622 600 1644 586" fill="none" stroke="#f9dadd" stroke-width="2.8000000000000003"/>
<path d="M1396 376 1369 521 1429 536" fill="none" stroke="#cfcfc4" stroke-width="1.25" />
<rect x="524.5" y="311" width="37" height="26" rx="2" fill="#dfc6cb" stroke="#cfb0b8"/>
<path d="M511 452.6 536 452.6 536 477.4 511 477.4Z" fill="#dfc6cb" stroke="#d3b4bb" stroke-width="1"/>
<path d="M701.6 543.4 725.6 543.4 725.6 567 701.6 567Z" fill="#dfc6cb" stroke="#d3b4bb" stroke-width="1"/>
<path d="M862 693 886 693 886 717 862 717Z" fill="#dfc6cb" stroke="#d3b4bb" stroke-width="1"/>
<path d="M1242 576 1266 576 1266 600 1242 600Z" fill="#dfc6cb" stroke="#d3b4bb" stroke-width="1"/>
<path d="M1524.6 650 1548 650 1548 674 1524.6 674Z" fill="#dfc6cb" stroke="#d3b4bb" stroke-width="1"/>
<path d="M1485.6 686 1509 686 1509 710 1485.6 710Z" fill="#dfc6cb" stroke="#d3b4bb" stroke-width="1"/>
<path d="M979 727 1015 728 1014 756.4 995 757 994 763.6 977.6 762.4Z" fill="#dfc6cb" stroke="#d3b4bb" stroke-width="1"/>
<path d="M1043 727 1067 727 1067 751.6 1043 751.6Z" fill="#dfc6cb" stroke="#d3b4bb" stroke-width="1"/>
<path d="M979 784 1017 783.6 1017.6 823 980 825Z" fill="#dfc6cb" stroke="#d3b4bb" stroke-width="1"/>
<path d="M1020 854 1063.6 854 1063.6 862 1020 862Z" fill="#dfc6cb" stroke="#d3b4bb" stroke-width="1"/>
<path d="M1093 840.4 1113 840.4 1113 862 1093 862Z" fill="#dfc6cb" stroke="#d3b4bb" stroke-width="1"/>
<path d="M959 315.4 998.4 320 993.6 364.6 950 359.4 951 346.6 936.4 344.6 937.6 330 957 332Z" fill="#e5cfac" stroke="#cdb694" stroke-width="1"/>
<path d="M931 400.6 955.4 400.6 955.4 425 931 425Z" fill="#e5cfac" stroke="#cdb694" stroke-width="1"/>
<path d="M1068 332 1101 338.6 1096 363.4 1063 356.6Z" fill="#e5cfac" stroke="#cdb694" stroke-width="1"/>
<path d="M1170 323 1185 323 1185 338.6 1170 338.6Z" fill="#f0d9b8" stroke="#e6cfae" stroke-width="1"/>
<path d="M1061.6 396.6 1085.6 396.6 1085.6 422 1061.6 422Z" fill="#e5cfac" stroke="#cdb694" stroke-width="1"/>
<path d="M1139 446.6 1164 446.6 1164 471 1139 471Z" fill="#e6e7ad" stroke="#d6d89e" stroke-width="1"/>
<path d="M1416.4 432 1438.4 436 1431 472 1423 476 1415 473 1413.6 468 1408 466Z" fill="#d6dacd" stroke="#bcc0b3" stroke-width="1"/>
<path d="M1008 510 1155.6 538 1137 639 991 611Z" fill="none" stroke="#4fa568" stroke-width="4.2" stroke-linejoin="miter"/>
<path d="M1001 567 1146 594" fill="none" stroke="#4fa568" stroke-width="4.2"/>
<text x="512" y="288" font-size="13.5" fill="#8c7579" font-weight="400" text-anchor="middle" dominant-baseline="central" letter-spacing="0">30</text>
<text x="664" y="304" font-size="13.5" fill="#8c7579" font-weight="400" text-anchor="middle" dominant-baseline="central" letter-spacing="0">28</text>
<text x="917" y="312" font-size="13.5" fill="#8c7579" font-weight="400" text-anchor="middle" dominant-baseline="central" letter-spacing="0">102</text>
<text x="899.6" y="400" font-size="13.5" fill="#8c7579" font-weight="400" text-anchor="middle" dominant-baseline="central" letter-spacing="0">104</text>
<text x="1117.6" y="344.6" font-size="13.5" fill="#8c7579" font-weight="400" text-anchor="middle" dominant-baseline="central" letter-spacing="0">101</text>
<text x="1098" y="449" font-size="13.5" fill="#8c7579" font-weight="400" text-anchor="middle" dominant-baseline="central" letter-spacing="0">14</text>
<text x="1413" y="455" font-size="12" fill="#b5b5aa" font-weight="400" text-anchor="middle" dominant-baseline="central" letter-spacing="0">4</text>
<text x="625" y="508" font-size="13.5" fill="#8c7579" font-weight="400" text-anchor="middle" dominant-baseline="central" letter-spacing="0">29</text>
<text x="681.6" y="518" font-size="13.5" fill="#8c7579" font-weight="400" text-anchor="middle" dominant-baseline="central" letter-spacing="0" transform="rotate(-10 681.6 518)">27</text>
<text x="740" y="530" font-size="13.5" fill="#8c7579" font-weight="400" text-anchor="middle" dominant-baseline="central" letter-spacing="0" transform="rotate(-8 740 530)">25</text>
<text x="651" y="625" font-size="13" fill="#8c7579" font-weight="400" text-anchor="middle" dominant-baseline="central" letter-spacing="0" transform="rotate(76 651 625)">19-21</text>
<text x="873" y="496" font-size="12.5" fill="#8c7579" font-weight="400" text-anchor="middle" dominant-baseline="central" letter-spacing="0" transform="rotate(75 873 496)">108</text>
<text x="865" y="570.6" font-size="13.5" fill="#8c7579" font-weight="400" text-anchor="middle" dominant-baseline="central" letter-spacing="0">110</text>
<text x="861" y="692" font-size="13.5" fill="#8c7579" font-weight="400" text-anchor="middle" dominant-baseline="central" letter-spacing="0">116</text>
<text x="1070" y="559" font-size="12.5" fill="#c8b0b0" font-weight="400" text-anchor="middle" dominant-baseline="central" letter-spacing="0" transform="rotate(72 1070 559)">109</text>
<text x="1222" y="581" font-size="13.5" fill="#8c7579" font-weight="400" text-anchor="middle" dominant-baseline="central" letter-spacing="0">11</text>
<text x="1212" y="638.6" font-size="13.5" fill="#8c7579" font-weight="400" text-anchor="middle" dominant-baseline="central" letter-spacing="0">68</text>
<text x="1424" y="621.6" font-size="13.5" fill="#8c7579" font-weight="400" text-anchor="middle" dominant-baseline="central" letter-spacing="0">65</text>
<text x="1561.6" y="684.6" font-size="13.5" fill="#8c7579" font-weight="400" text-anchor="middle" dominant-baseline="central" letter-spacing="0">1</text>
<text x="1040" y="711" font-size="12.5" fill="#8c7579" font-weight="400" text-anchor="middle" dominant-baseline="central" letter-spacing="0" transform="rotate(72 1040 711)">117</text>
<text x="826" y="795" font-size="13" fill="#8c7579" font-weight="400" text-anchor="middle" dominant-baseline="central" letter-spacing="0" transform="rotate(8 826 795)">118</text>
<text x="1041" y="814" font-size="13.5" fill="#8c7579" font-weight="400" text-anchor="middle" dominant-baseline="central" letter-spacing="0">119</text>
<text x="1407" y="559.5" font-size="14.5" fill="#5e4b4d" font-weight="700" text-anchor="middle" dominant-baseline="central" letter-spacing="0.6" transform="rotate(11.5 1407 559.5)">DUNN</text>
<text x="1472.5" y="572" font-size="14.5" fill="#5e4b4d" font-weight="700" text-anchor="middle" dominant-baseline="central" letter-spacing="0.6" transform="rotate(11.5 1472.5 572)">STREET</text>
<path d="M1432 564.5 1440 566.2M1431.5 567.5 1439.5 569.2" stroke="#bfa3aa" stroke-width="1.2"/>
<text x="940" y="806" font-size="14.5" fill="#5e4b4d" font-weight="700" text-anchor="middle" dominant-baseline="central" letter-spacing="0.3" transform="rotate(-88 940 806)">HIGH</text>
<text x="945" y="743.5" font-size="14.5" fill="#5e4b4d" font-weight="700" text-anchor="middle" dominant-baseline="central" letter-spacing="0.3" transform="rotate(-82 945 743.5)">STREET</text>
<path d="M939 778.5V783M942 778.5V783" stroke="#bfa3aa" stroke-width="1.2"/>
<text x="1294" y="753" font-size="15.8" fill="#5e4b4d" font-weight="700" text-anchor="middle" dominant-baseline="central" letter-spacing="0.5" transform="rotate(-79 1294 753)">STREET</text>
<text x="1278.5" y="834" font-size="15.8" fill="#5e4b4d" font-weight="700" text-anchor="middle" dominant-baseline="central" letter-spacing="0.5" transform="rotate(-79 1278.5 834)">GANA</text>
<path d="M1280.5 806 1283.3 791M1283.6 806.6 1286.4 791.6" stroke="#bfa3aa" stroke-width="1.2"/>
<rect x="1289" y="667.4" width="36.4" height="16" rx="3" fill="#6e5659"/>
<text x="1307.2" y="675.6" font-size="12" fill="#fbeff0" font-weight="700" text-anchor="middle" dominant-baseline="central" letter-spacing="-0.2">C 429</text>
<rect x="503.5" y="289.5" width="1139" height="569.5" fill="none" stroke="#e3cfd0" stroke-width="1"/>
</svg>
<div class="t" style="left:262.80px;top:810.55px;font-size:14px;line-height:18px;font-weight:700;color:#1c1c1c;letter-spacing:0.440px;-webkit-text-stroke:0.4px #1c1c1c;transform:scaleX(1.07);transform-origin:0 0;">Interim Planning Zone</div>
<div class="abs" style="left:263px;top:838.5px;width:1140px;height:2px;background:#4a4a4a"></div>
<div class="t" style="left:263.00px;top:848.63px;font-size:15.5px;line-height:20px;font-weight:400;color:#333333;letter-spacing:0.640px;transform:scaleX(1.05);transform-origin:0 0;">Zone</div>
<div class="t" style="left:612.80px;top:848.63px;font-size:15.5px;line-height:20px;font-weight:400;color:#333333;letter-spacing:0.487px;transform:scaleX(1.05);transform-origin:0 0;">12.0 Low Density Residential</div>
<div class="t" style="left:1226.90px;top:899.85px;font-size:16.3px;line-height:21px;font-weight:400;color:#222;letter-spacing:0.630px;transform:scaleX(1.06);transform-origin:0 0;">View this on the LIST</div>
<div class="abs" style="left:1227px;top:917.4px;width:176.7px;height:1.5px;background:#333"></div>
<div class="abs" style="left:1251.2px;top:945.2px;width:150px;height:42.8px;border-radius:6px;background:#dedede"></div>
<div class="t" style="left:1272.90px;top:957.30px;font-size:15px;line-height:20px;font-weight:400;color:#3d4852;letter-spacing:0.487px;transform:scaleX(1.05);transform-origin:0 0;">Start again</div>
<svg class="abs" style="left:1363px;top:958px" width="20" height="18" viewBox="0 0 20 18"><path d="M7 4.9A5.4 5.4 0 1 1 5.2 11" fill="none" stroke="#0b0b0b" stroke-width="2.4" stroke-linecap="round"/><path d="M2.6 2.9 3 8 7.6 7.4Z" fill="#0b0b0b" stroke="#0b0b0b" stroke-width="0.8" stroke-linejoin="round"/></svg>
<div class="t" style="left:263.50px;top:987.00px;font-size:20.2px;line-height:26px;font-weight:700;color:#f4f4f4;letter-spacing:-0.494px;-webkit-text-stroke:0.4px #f4f4f4;">TasWater - Water Service</div>
</div>
<div id="vtrack"></div><div id="vthumb"></div>
</body>
</html>
